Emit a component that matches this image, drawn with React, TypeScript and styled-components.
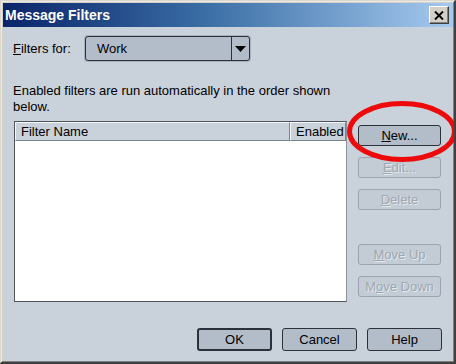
import { FunctionComponent } from 'react'
import { createGlobalStyle, styled } from 'styled-components'

const GlobalStyle = createGlobalStyle`
  body {
    margin: 0;
    font-family: 'Liberation Sans', Arial, sans-serif;
  }
`

const App: FunctionComponent = () => {
  return (
    <>
      <GlobalStyle />
      <Window>
        <TitleBar>
          <Title>Message Filters</Title>
          <CloseButton>
            <svg width='10' height='9' viewBox='0 0 10 9'>
              <path d='M1 0.5 L9 8.5 M9 0.5 L1 8.5' stroke='#000' strokeWidth='2' />
            </svg>
          </CloseButton>
        </TitleBar>
        <Body>
          <FilterRow>
            <Label>
              <u>F</u>ilters for:
            </Label>
            <Combo>
              <ComboValue>Work</ComboValue>
              <ComboArrow>
                <svg width='11' height='6' viewBox='0 0 11 6'>
                  <path d='M0 0 H11 L5.5 6 Z' fill='#000' />
                </svg>
              </ComboArrow>
            </Combo>
          </FilterRow>
          <Description>
            Enabled filters are run automatically in the order shown
            <br />
            below.
          </Description>
          <Main>
            <Table>
              <HeaderRow>
                <HeaderCell>Filter Name</HeaderCell>
                <HeaderCell narrow>Enabled</HeaderCell>
              </HeaderRow>
            </Table>
            <SideButtons>
              <Button>
                <u>N</u>ew...
              </Button>
              <Button disabled>
                <u>E</u>dit...
              </Button>
              <Button disabled>
                <u>D</u>elete
              </Button>
              <Spacer />
              <Button disabled>
                <u>M</u>ove Up
              </Button>
              <Button disabled>
                M<u>o</u>ve Down
              </Button>
            </SideButtons>
          </Main>
          <Footer>
            <DialogButton isDefault>OK</DialogButton>
            <DialogButton>Cancel</DialogButton>
            <DialogButton>Help</DialogButton>
          </Footer>
        </Body>
        <Highlight width='116' height='70' viewBox='343 97 116 70'>
          <ellipse cx='401' cy='130.5' rx='52.5' ry='28' fill='none' stroke='#ee0a0a' strokeWidth='5' />
        </Highlight>
      </Window>
    </>
  )
}
export default App

const Window = styled.div`
  position: relative;
  box-sizing: border-box;
  width: 456px;
  height: 364px;
  overflow: hidden;
  display: flex;
  flex-direction: column;
  background-color: #d4d0c8;
  border-style: solid;
  border-width: 1px 2px 2px 1px;
  border-color: #dcd8d0 #404040 #404040 #dcd8d0;
  box-shadow: inset 1px 1px #ece9e2, inset -1px -1px #808080;
  padding: 2px 1px 1px 2px;
`

const TitleBar = styled.div`
  height: 24px;
  display: flex;
  align-items: center;
  justify-content: space-between;
  padding: 0 4px 0 2px;
  background: linear-gradient(to right, #0a246a 0%, #3a6ea5 45%, #a6caf0 100%);
`

const Title = styled.div`
  color: #fff;
  font-weight: bold;
  font-size: 14px;
`

const CloseButton = styled.div`
  box-sizing: border-box;
  width: 20px;
  height: 18px;
  display: flex;
  align-items: center;
  justify-content: center;
  background-color: #d4d0c8;
  border: 1px solid;
  border-color: #fff #404040 #404040 #fff;
  box-shadow: inset -1px -1px #808080;
`

const Body = styled.div`
  flex: 1;
  display: flex;
  flex-direction: column;
  background-color: #c9d1da;
  padding: 9px 8px 0 10px;
  font-size: 13px;
  color: #000;
`

const FilterRow = styled.div`
  display: flex;
  align-items: center;
  height: 25px;
`

const Label = styled.div`
  width: 72px;
`

const Combo = styled.div`
  box-sizing: border-box;
  width: 165px;
  height: 25px;
  display: flex;
  border: 1px solid #2c3038;
  border-radius: 3px;
  background-color: #b3bcc9;
  box-shadow: 0 0 0 1px #a8b1bd;
`

const ComboValue = styled.div`
  flex: 1;
  display: flex;
  align-items: center;
  padding-left: 11px;
`

const ComboArrow = styled.div`
  width: 17px;
  display: flex;
  align-items: center;
  justify-content: center;
  border-left: 1px solid #2c3038;
`

const Description = styled.div`
  margin-top: 22px;
  line-height: 16px;
`

const Main = styled.div`
  display: flex;
  gap: 11px;
  margin-top: 6px;
`

const Table = styled.div`
  box-sizing: border-box;
  width: 333px;
  height: 181px;
  margin-left: 1px;
  background-color: #fff;
  border: 1px solid #50545c;
  border-right-color: #8a929c;
  border-bottom-color: #50545c;
`

const HeaderRow = styled.div`
  display: flex;
  height: 19px;
`

const HeaderCell = styled.div<{ narrow?: boolean }>`
  box-sizing: border-box;
  ${(props) => (props.narrow ? 'width: 56px;' : 'flex: 1;')}
  display: flex;
  align-items: center;
  padding-left: 5px;
  background-color: #c9d1da;
  border: 1px solid;
  border-color: #f4f6f8 #7c848e #7c848e #f4f6f8;
`

const SideButtons = styled.div`
  display: flex;
  flex-direction: column;
  gap: 11px;
  padding-top: 4px;
`

const Spacer = styled.div`
  height: 12px;
`

const Button = styled.div<{ disabled?: boolean }>`
  box-sizing: border-box;
  width: 83px;
  height: 21px;
  display: flex;
  align-items: center;
  justify-content: center;
  border-radius: 3px;
  border: 1px solid ${(props) => (props.disabled ? '#9aa3af' : '#2c3038')};
  background-color: ${(props) => (props.disabled ? '#c3cbd5' : '#b3bcc9')};
  color: ${(props) => (props.disabled ? '#9ea7b2' : '#000')};
  text-shadow: ${(props) => (props.disabled ? '1px 1px #e4e9ee' : 'none')};
`

const Footer = styled.div`
  display: flex;
  justify-content: flex-end;
  gap: 10px;
  margin-top: 26px;
  padding-right: 3px;
`

const DialogButton = styled.div<{ isDefault?: boolean }>`
  box-sizing: border-box;
  width: 75px;
  height: 23px;
  display: flex;
  align-items: center;
  justify-content: center;
  border-radius: 3px;
  border: ${(props) => (props.isDefault ? '2px' : '1px')} solid #2c3038;
  background-color: #b3bcc9;
`

const Highlight = styled.svg`
  position: absolute;
  left: 343px;
  top: 97px;
  pointer-events: none;
`
